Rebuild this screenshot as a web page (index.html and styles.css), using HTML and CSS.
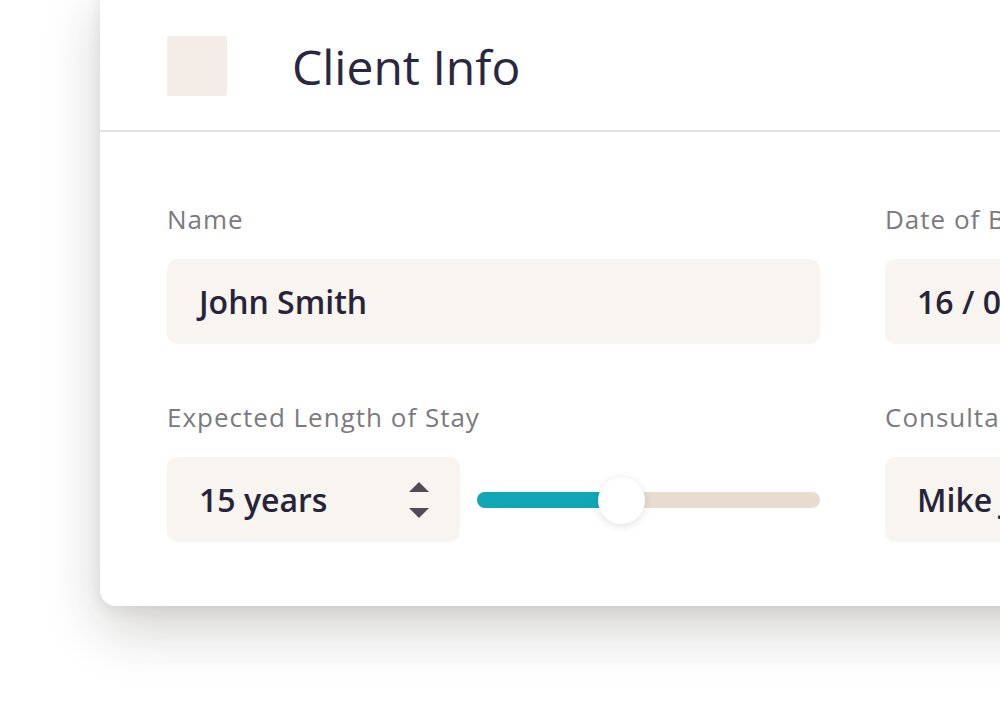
FILE: index.html
```html
<!DOCTYPE html>
<html>
<head>
<meta charset="utf-8">
<link rel="stylesheet" href="styles.css">
</head>
<body>
<div class="page">
  <div class="card">
    <div class="card-header">
      <div class="logo-box"></div>
      <h1 class="title">Client Info</h1>
    </div>
    <div class="card-body">
      <div class="grid">
        <div class="field">
          <div class="label">Name</div>
          <div class="input">John Smith</div>
        </div>
        <div class="field">
          <div class="label">Date of Birth</div>
          <div class="input">16 / 04 / 1985</div>
        </div>
        <div class="field">
          <div class="label">Expected Length of Stay</div>
          <div class="stay-row">
            <div class="input select">
              <span>15 years</span>
              <svg class="stepper" width="22" height="38" viewBox="0 0 22 38">
                <path d="M1 11 L11 1 L21 11 Z" fill="#4f4a55"/>
                <path d="M1 27 L11 37 L21 27 Z" fill="#4f4a55"/>
              </svg>
            </div>
            <div class="slider">
              <div class="track">
                <div class="fill" style="width: 42%"></div>
              </div>
              <div class="thumb" style="left: 42%"></div>
            </div>
          </div>
        </div>
        <div class="field">
          <div class="label">Consultant</div>
          <div class="input">Mike Johnson</div>
        </div>
      </div>
    </div>
  </div>
</div>
</body>
</html>
```

FILE: styles.css
```css
html, body {
  margin: 0;
  padding: 0;
  background: #ffffff;
  overflow: hidden;
  width: 1000px;
  height: 707px;
}

body {
  font-family: "Open Sans", "Noto Sans", sans-serif;
  color: #27243a;
}

.page {
  padding-left: 100px;
  width: 1000px;
  box-sizing: border-box;
}

.card {
  width: 1000px;
  margin-top: -20px;
  background: #ffffff;
  border-radius: 16px;
  box-shadow: 0 24px 56px rgba(40, 35, 30, 0.2), 0 4px 16px rgba(40, 35, 30, 0.07);
}

.card-header {
  display: flex;
  align-items: center;
  gap: 65px;
  height: 152px;
  padding: 22px 0 0 67px;
  box-sizing: border-box;
  border-bottom: 2px solid #e2e1e3;
}

.logo-box {
  width: 60px;
  height: 60px;
  background: #f4ece7;
  border-radius: 2px;
  flex-shrink: 0;
}

.title {
  margin: 0;
  font-size: 48px;
  font-weight: 400;
  color: #2a2740;
}

.card-body {
  padding: 70px 0 64px 67px;
}

.grid {
  display: grid;
  grid-template-columns: 653px 653px;
  column-gap: 65px;
  row-gap: 56px;
}

.field {
  display: flex;
  flex-direction: column;
  gap: 23px;
}

.label {
  font-size: 26px;
  line-height: 34px;
  letter-spacing: 1px;
  color: #7b7a80;
  white-space: nowrap;
}

.input {
  height: 85px;
  box-sizing: border-box;
  background: #f8f5f0;
  border-radius: 10px;
  padding: 0 32px;
  display: flex;
  align-items: center;
  font-size: 32px;
  font-weight: 600;
  color: #27243a;
  white-space: nowrap;
}

.stay-row {
  display: flex;
  align-items: center;
  gap: 17px;
}

.select {
  width: 293px;
  justify-content: space-between;
  padding-right: 30px;
  flex-shrink: 0;
}

.stepper {
  display: block;
}

.slider {
  position: relative;
  flex: 1;
  height: 48px;
  display: flex;
  align-items: center;
}

.track {
  width: 100%;
  height: 16px;
  border-radius: 8px;
  background: #e8dcd0;
  overflow: hidden;
}

.fill {
  height: 100%;
  background: #11a7b7;
}

.thumb {
  position: absolute;
  top: 1px;
  width: 47px;
  height: 47px;
  margin-left: -23px;
  border-radius: 50%;
  background: #ffffff;
  box-shadow: 0 2px 8px rgba(0, 0, 0, 0.12);
}
```
